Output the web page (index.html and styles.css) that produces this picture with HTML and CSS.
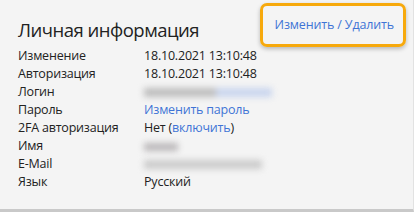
FILE: index.html
```html
<!DOCTYPE html>
<html lang="ru">
<head>
  <meta charset="UTF-8" />
  <title>Личная информация</title>
  <link rel="stylesheet" href="styles.css">
</head>
<body>
  <div class="card">
    <div class="card-head">
      <h2>Личная информация</h2>
      <div class="highlight">
        <a href="#" class="edit-link">Изменить / Удалить</a>
      </div>
    </div>

    <div class="info">
      <div class="label">Изменение</div>
      <div class="value">18.10.2021 13:10:48</div>

      <div class="label">Авторизация</div>
      <div class="value">18.10.2021 13:10:48</div>

      <div class="label">Логин</div>
      <div class="value"><span class="blur blur-login"><span class="b-grey"></span><span class="b-blue"></span></span></div>

      <div class="label">Пароль</div>
      <div class="value"><a href="#">Изменить пароль</a></div>

      <div class="label">2FA авторизация</div>
      <div class="value">Нет (<a href="#">включить</a>)</div>

      <div class="label">Имя</div>
      <div class="value"><span class="blur blur-name"></span></div>

      <div class="label">E-Mail</div>
      <div class="value"><span class="blur blur-mail"></span></div>

      <div class="label">Язык</div>
      <div class="value">Русский</div>
    </div>
  </div>
</body>
</html>
```

FILE: styles.css
```css
body {
  margin: 0;
  background: #fff;
  font-family: "Open Sans", Arial, sans-serif;
  color: #222;
}

.card {
  width: 413px;
  height: 209px;
  background: #f4f4f4;
  border-right: 1px solid #e2e2e2;
  border-bottom: 3px solid #c9c9c9;
  box-sizing: content-box;
}

.card-head {
  display: flex;
  justify-content: space-between;
  align-items: flex-start;
  padding: 3px 7px 0 18px;
}

.card-head h2 {
  margin: 14px 0 0;
  font-size: 18.5px;
  letter-spacing: -0.5px;
  font-weight: normal;
  color: #222;
  line-height: 26px;
}

.highlight {
  border: 3px solid #f7a90c;
  border-radius: 7px;
  padding: 12px 9px 12px 12px;
  box-shadow: 0 2px 4px rgba(0, 0, 0, 0.25);
}

.edit-link {
  color: #3f74d6;
  text-decoration: none;
  font-size: 12.5px;
  letter-spacing: -0.15px;
  line-height: 14px;
  display: block;
}

.info {
  display: grid;
  grid-template-columns: 126px 1fr;
  padding: 0 0 0 18px;
  font-size: 12.5px;
  letter-spacing: -0.2px;
  line-height: 18px;
}

.info a {
  color: #3f74d6;
  text-decoration: none;
}

.blur {
  display: inline-block;
  vertical-align: middle;
  filter: blur(3px);
}

.blur-login {
  display: inline-flex;
  width: 128px;
  height: 9px;
}

.b-grey {
  flex: 1.3;
  background: #bdbdbd;
}

.b-blue {
  flex: 1;
  background: #c9d5ee;
}

.blur-name {
  width: 34px;
  height: 8px;
  background: #bab7b9;
}

.blur-mail {
  width: 118px;
  height: 9px;
  background: #cbcbcb;
}
```
